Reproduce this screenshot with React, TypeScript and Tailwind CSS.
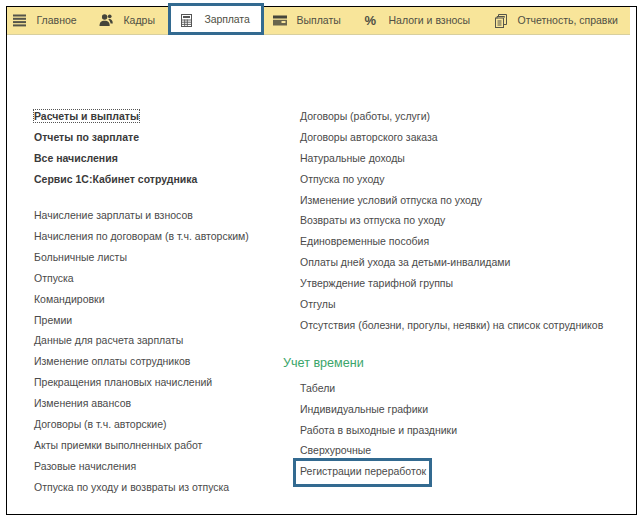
const font = { fontFamily: '"Liberation Sans", Arial, sans-serif' };

function Menu() {
  return (
    <svg width="13" height="13" viewBox="0 0 13 13" fill="#55554a">
      <rect x="0" y="0.5" width="13" height="2" />
      <rect x="0" y="3.8" width="13" height="2" />
      <rect x="0" y="7.1" width="13" height="2" />
      <rect x="0" y="10.4" width="13" height="2" />
    </svg>
  );
}
function People() {
  return (
    <svg width="14" height="13" viewBox="0 0 15 14" fill="#45453a">
      <circle cx="6" cy="3.2" r="2.9" />
      <path d="M0.5 13c0-3.6 1.6-5.6 5.5-5.6s5.5 2 5.5 5.6z" />
      <circle cx="11.5" cy="2.5" r="2" />
      <path d="M10 5.6c3 -.6 4.8 1.2 4.8 4.6h-2.4c-.3-2-1-3.2-2.4-4.6z" />
    </svg>
  );
}
function Calc() {
  return (
    <svg width="11" height="13" viewBox="0 0 11 13" fill="none" stroke="#555" strokeWidth="1">
      <rect x="0.5" y="0.5" width="10" height="12" />
      <rect x="2" y="2" width="7" height="2" fill="#555" stroke="none" />
      <path d="M1 6h9M1 8.2h9M1 10.4h9M3.7 5.5v6.5M6.3 5.5v6.5" strokeWidth="0.9" />
    </svg>
  );
}
function Card() {
  return (
    <svg width="14" height="11" viewBox="0 0 14 11" fill="#45453a">
      <rect x="0" y="0.5" width="14" height="3" />
      <path d="M0 4.8h14v5.7H0z" fillOpacity="0.8" />
      <rect x="8.5" y="6" width="4" height="2" fill="#f8e59a" />
    </svg>
  );
}
function Docs() {
  return (
    <svg width="12" height="14" viewBox="0 0 12 14" fill="none" stroke="#55554a" strokeWidth="1">
      <path d="M3.5 3V.5h8v10H9" />
      <path d="M2 4.5V2.5h7.5v1" />
      <rect x="0.5" y="4" width="8" height="9.5" />
      <path d="M2.5 7h4M2.5 9h4M2.5 11h4" />
    </svg>
  );
}

function Tab({ icon, label, className }: { icon: React.ReactNode; label: string; className: string }) {
  return (
    <div className={`flex items-center ${className}`}>
      <span className="flex w-[15px] justify-center">{icon}</span>
      <span>{label}</span>
    </div>
  );
}

const bold = ["Расчеты и выплаты", "Отчеты по зарплате", "Все начисления", "Сервис 1С:Кабинет сотрудника"];
const left = [
  "Начисление зарплаты и взносов",
  "Начисления по договорам (в т.ч. авторским)",
  "Больничные листы",
  "Отпуска",
  "Командировки",
  "Премии",
  "Данные для расчета зарплаты",
  "Изменение оплаты сотрудников",
  "Прекращения плановых начислений",
  "Изменения авансов",
  "Договоры (в т.ч. авторские)",
  "Акты приемки выполненных работ",
  "Разовые начисления",
  "Отпуска по уходу и возвраты из отпуска",
];
const right = [
  "Договоры (работы, услуги)",
  "Договоры авторского заказа",
  "Натуральные доходы",
  "Отпуска по уходу",
  "Изменение условий отпуска по уходу",
  "Возвраты из отпуска по уходу",
  "Единовременные пособия",
  "Оплаты дней ухода за детьми-инвалидами",
  "Утверждение тарифной группы",
  "Отгулы",
  "Отсутствия (болезни, прогулы, неявки) на список сотрудников",
];
const time = ["Табели", "Индивидуальные графики", "Работа в выходные и праздники", "Сверхурочные"];

function Row({ text }: { text: string }) {
  return <div className="h-[20.9px] leading-[21px] whitespace-nowrap">{text}</div>;
}

export default function App() {
  return (
    <div style={font} className="h-[520px] w-[642px] overflow-hidden bg-white pl-[6px] pr-[5px] pt-[6px] text-[10.5px] text-[#4a4a4a]">
      <div className="h-[509px] w-[631px] border-[1.5px] border-black">
        <div className="flex h-[28px] w-[623px] items-center border-b border-[#d8cf9e] bg-[#f8e59a] pl-[4.5px] text-[#4f4f44]">
          <Tab icon={<Menu />} label="Главное" className="w-[87px] shrink-0 gap-[10px]" />
          <Tab icon={<People />} label="Кадры" className="w-[69px] shrink-0 gap-[10px]" />
          <div className="relative -mt-[4px] flex h-[32px] w-[96px] shrink-0 items-center border-[3px] border-[#336a90] bg-white pt-[3px] pl-[8.5px]">
            <Tab icon={<Calc />} label="Зарплата" className="gap-[10.5px] tracking-[-0.1px]" />
          </div>
          <Tab icon={<Card />} label="Выплаты" className="ml-[9px] w-[92px] shrink-0 gap-[9px]" />
          <div className="flex w-[129px] shrink-0 items-center">
            <span className="w-[24px] text-[13px] font-bold">%</span>
            <span>Налоги и взносы</span>
          </div>
          <Tab icon={<Docs />} label="Отчетность, справки" className="gap-[9px]" />
        </div>
        <div className="flex pt-[71px]">
          <div className="w-[267px] shrink-0 pl-[27px]">
            <div className="mb-[15.5px]">
              {bold.map((t, i) => (
                <div key={t} className="h-[20.9px] leading-[21px] font-bold whitespace-nowrap text-[#3a3a3a]">
                  <span className={i === 0 ? "outline-1 outline-dotted outline-[#555]" : ""}>{t}</span>
                </div>
              ))}
            </div>
            {left.map((t) => (
              <Row key={t} text={t} />
            ))}
          </div>
          <div className="pl-[26px]">
            {right.map((t) => (
              <Row key={t} text={t} />
            ))}
            <div className="mt-[17.5px] mb-[3.5px] -ml-[17px] h-[21px] text-[12.6px] leading-[21px] text-[#3aa56a]">Учет времени</div>
            {time.map((t) => (
              <Row key={t} text={t} />
            ))}
            <div className="-mt-[3px] -ml-[7px] flex h-[29px] w-[139px] items-center border-[3px] border-[#336a90] pb-[2px] pl-[4px] whitespace-nowrap">
              Регистрации переработок
            </div>
          </div>
        </div>
      </div>
    </div>
  );
}
